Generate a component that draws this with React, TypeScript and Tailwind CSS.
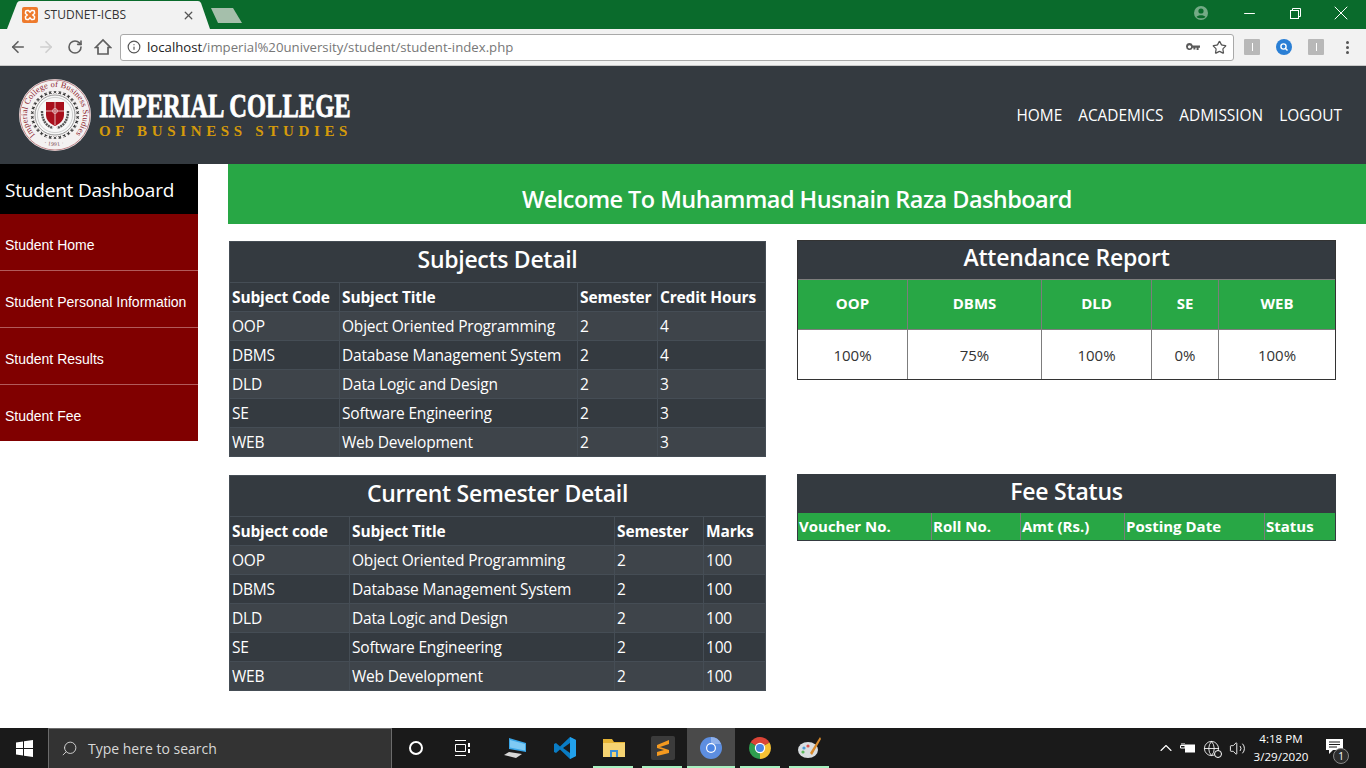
import { ArrowLeft, ArrowRight, RotateCw, Info, Star, X, Minus, Search, ChevronUp, Volume2, Globe } from "lucide-react";

const SEGOE = "font-['Open_Sans',sans-serif]";

const subjects = [
  { code: "OOP", title: "Object Oriented Programming", semester: "2", credit: "4", marks: "100" },
  { code: "DBMS", title: "Database Management System", semester: "2", credit: "4", marks: "100" },
  { code: "DLD", title: "Data Logic and Design", semester: "2", credit: "3", marks: "100" },
  { code: "SE", title: "Software Engineering", semester: "2", credit: "3", marks: "100" },
  { code: "WEB", title: "Web Development", semester: "2", credit: "3", marks: "100" },
];

const attendance = [
  { name: "OOP", value: "100%", width: "w-[110px]" },
  { name: "DBMS", value: "75%", width: "w-[134px]" },
  { name: "DLD", value: "100%", width: "w-[110px]" },
  { name: "SE", value: "0%", width: "w-[67px]" },
  { name: "WEB", value: "100%", width: "w-[116px]" },
];

const feeColumns = [
  { name: "Voucher No.", width: "w-[134px]" },
  { name: "Roll No.", width: "w-[89px]" },
  { name: "Amt (Rs.)", width: "w-[104px]" },
  { name: "Posting Date", width: "w-[140px]" },
  { name: "Status", width: "w-[70px]" },
];

function Seal() {
  const ticks = Array.from({ length: 30 }, (_, i) => i * 12);
  return (
    <svg width="74" height="74" viewBox="0 0 74 74" className="shrink-0">
      <defs>
        <path id="sealArc" d="M 17.2 56.8 A 28 28 0 1 1 56.8 56.8" />
        <path id="sealYear" d="M 22 64 A 31 31 0 0 0 52 64" />
      </defs>
      <circle cx="37" cy="37" r="36" fill="#f4f1f1" />
      <circle cx="37" cy="37" r="35" fill="none" stroke="#9a3a42" strokeWidth="0.6" />
      <text fontFamily="'Liberation Serif',serif" fontSize="8.4" fill="#8e2530" textLength="130">
        <textPath href="#sealArc">Imperial College of Business Studies</textPath>
      </text>
      <text fontFamily="'Liberation Serif',serif" fontSize="5.5" fill="#6b3a40" letterSpacing="0.4">
        <textPath href="#sealYear" startOffset="14%">· 1991 ·</textPath>
      </text>
      {ticks.map((deg) => (
        <g key={deg} transform={`rotate(${deg} 37 37)`}>
          <path d="M35.8 13 L38.2 15.4 M38.2 13 L35.8 15.4" stroke="#3a3a3a" strokeWidth="1" />
        </g>
      ))}
      <circle cx="37" cy="37" r="20" fill="#f7f7f7" stroke="#9b9b9b" strokeWidth="1" />
      <circle cx="37" cy="37" r="17.6" fill="none" stroke="#bdbdbd" strokeWidth="0.7" />
      <path d="M24 33 C24 42 28 48 35 50 M50 33 C50 42 46 48 39 50" fill="none" stroke="#555" strokeWidth="2.4" strokeDasharray="2 0.7" />
      <path d="M28 24 H46 V37 C46 43 41 46 37 48 C33 46 28 43 28 37 Z" fill="#a80f1c" />
      <path d="M37 24 V47 M28 33 H46" stroke="#e9c9c9" strokeWidth="0.9" />
      <circle cx="37" cy="33" r="2.4" fill="none" stroke="#f2dede" strokeWidth="0.8" />
    </svg>
  );
}

function Xampp() {
  return (
    <svg width="16" height="16" viewBox="0 0 16 16" className="shrink-0">
      <rect width="16" height="16" rx="2" fill="#ee7a2c" />
      <path d="M3.5 5 Q3.5 3.5 5 3.5 H6.5 L8 5.2 L9.5 3.5 H11 Q12.5 3.5 12.5 5 V6.5 L10.8 8 L12.5 9.5 V11 Q12.5 12.5 11 12.5 H9.5 L8 10.8 L6.5 12.5 H5 Q3.5 12.5 3.5 11 V9.5 L5.2 8 L3.5 6.5 Z" fill="none" stroke="#fff" strokeWidth="1.5" />
    </svg>
  );
}

function TabStrip() {
  return (
    <div className="flex h-[29px] bg-[#0a6b2c]">
      <div className="relative ml-[7px] flex h-[28px] w-[203px] items-center self-end pl-[15px]">
        <svg width="203" height="28" viewBox="0 0 203 28" className="absolute left-0 top-0">
          <path d="M0 28 L10 2 Q11 0 13 0 H191 Q193 0 194 2 L203 28 Z" fill="#f2f2f2" />
        </svg>
        <div className="relative flex w-[173px] items-center">
          <Xampp />
          <span className={`ml-[6px] text-[12px] text-[#333] ${SEGOE}`}>STUDNET-ICBS</span>
          <X size={13} strokeWidth={2.4} className="ml-auto text-[#555]" />
        </div>
      </div>
      <svg width="34" height="16" viewBox="0 0 34 16" className="mt-[8px] shrink-0">
        <path d="M1 0 H23 L32 15 H8 Z" fill="#a5bfab" />
      </svg>
      <div className="ml-auto flex items-start pr-[2px]">
        <svg width="16" height="16" viewBox="0 0 16 16" className="mr-[17px] mt-[5px]">
          <circle cx="8" cy="8" r="7" fill="#74ab86" />
          <circle cx="8" cy="6" r="2.6" fill="#0a6b2c" />
          <path d="M3.5 12 C5 9.5 11 9.5 12.5 12 C11 13.8 5 13.8 3.5 12 Z" fill="#0a6b2c" />
        </svg>
        <div className="flex h-[26px] w-[46px] items-center justify-center">
          <Minus size={17} strokeWidth={1.4} className="text-white" />
        </div>
        <div className="flex h-[26px] w-[46px] items-center justify-center">
          <svg width="11" height="11" viewBox="0 0 11 11" fill="none" stroke="#fff" strokeWidth="1">
            <rect x="0.5" y="2.5" width="8" height="8" />
            <path d="M2.5 2.5 V0.5 H10.5 V8.5 H8.5" />
          </svg>
        </div>
        <div className="flex h-[26px] w-[46px] items-center justify-center">
          <X size={24} strokeWidth={1} className="text-white" />
        </div>
      </div>
    </div>
  );
}

function ExtensionTile() {
  return (
    <div className="flex h-4 w-4 items-center justify-center rounded-[1px] bg-[#b8b8b8]">
      <div className="h-2 w-px bg-white" />
    </div>
  );
}

function Toolbar() {
  return (
    <div className="flex h-[37px] items-center border-b border-[#c9c9c9] bg-[#f2f2f2]">
      <ArrowLeft size={18} strokeWidth={2.2} className="ml-[9px] text-[#5f5f5f]" />
      <ArrowRight size={18} strokeWidth={2.2} className="ml-[10px] text-[#cfcfcf]" />
      <RotateCw size={16} strokeWidth={2.4} className="ml-[12px] text-[#5f5f5f]" />
      <svg width="18" height="18" viewBox="0 0 18 18" fill="none" stroke="#5f5f5f" strokeWidth="1.7" className="ml-[11px]">
        <path d="M1.5 9.5 L9 2 L16.5 9.5 H14 V16 H4 V9.5 Z" />
      </svg>
      <div className="ml-[8px] flex h-[27px] w-[1114px] items-center rounded-[3px] border border-[#a9a9a9] bg-white px-[6px]">
        <Info size={14} strokeWidth={2} className="text-[#555]" />
        <span className={`ml-[6px] pt-px text-[13.2px] ${SEGOE}`}>
          <span className="text-[#222]">localhost</span>
          <span className="text-[#777]">/imperial%20university/student/student-index.php</span>
        </span>
        <svg width="14" height="8" viewBox="0 0 14 8" className="ml-auto" fill="#5a5a5a">
          <path fillRule="evenodd" d="M3.5 0 A3.5 3.5 0 0 1 6.8 2.4 H14 V4.8 H12.6 V7 H10.6 V4.8 H9.4 V6.4 H7.4 V4.8 H6.8 A3.5 3.5 0 1 1 3.5 0 Z M3.5 2.2 A1.5 1.5 0 1 0 3.5 5.4 A1.5 1.5 0 1 0 3.5 2.2 Z" />
        </svg>
        <Star size={15} strokeWidth={2} className="ml-[12px] text-[#555]" />
      </div>
      <div className="ml-[10px]">
        <ExtensionTile />
      </div>
      <svg width="16" height="16" viewBox="0 0 16 16" className="ml-[16px]">
        <circle cx="8" cy="8" r="8" fill="#2a7fd5" />
        <circle cx="7.5" cy="7.5" r="2.6" fill="none" stroke="#fff" strokeWidth="1.4" />
        <path d="M9.5 9.5 L11.5 11.5" stroke="#fff" strokeWidth="1.4" />
      </svg>
      <div className="ml-[16px]">
        <ExtensionTile />
      </div>
      <div className="ml-[22px] flex flex-col gap-[2px]">
        <div className="h-[3px] w-[3px] rounded-full bg-[#555]" />
        <div className="h-[3px] w-[3px] rounded-full bg-[#555]" />
        <div className="h-[3px] w-[3px] rounded-full bg-[#555]" />
      </div>
    </div>
  );
}

function SiteHeader() {
  return (
    <header className="flex h-[98px] items-center bg-[#343a40] pl-[18px] pr-[24px]">
      <Seal />
      <div className="ml-[7px] w-[251px]">
        <div className="-mt-px origin-left scale-x-[0.722] whitespace-nowrap font-['Liberation_Serif',serif] text-[34px] font-bold leading-[34px] text-white [-webkit-text-stroke:0.8px_white]">
          IMPERIAL COLLEGE
        </div>
        <div className="-mt-px whitespace-nowrap font-['Liberation_Serif',serif] text-[15px] font-bold leading-[18px] tracking-[4.66px] text-[#d59a0b]">
          OF BUSINESS STUDIES
        </div>
      </div>
      <nav className={`ml-auto mt-[2px] flex gap-[16px] text-[15.4px] text-white ${SEGOE}`}>
        <span>HOME</span>
        <span>ACADEMICS</span>
        <span>ADMISSION</span>
        <span>LOGOUT</span>
      </nav>
    </header>
  );
}

function Sidebar() {
  const items = ["Student Home", "Student Personal Information", "Student Results", "Student Fee"];
  return (
    <aside className="w-[198px] shrink-0">
      <div className={`flex h-[50px] items-center bg-black pl-[5px] pt-[2px] text-[19px] tracking-[-0.2px] text-white ${SEGOE}`}>
        Student Dashboard
      </div>
      {items.map((item) => (
        <div
          key={item}
          className="flex h-[57px] items-center border-b border-[#b25a5a] bg-[#800000] pl-[5px] pt-[7px] font-['Liberation_Sans',sans-serif] text-[14px] text-white last:h-[56px] last:border-b-0"
        >
          {item}
        </div>
      ))}
    </aside>
  );
}

function DarkTable({
  title,
  columns,
  widths,
  rows,
}: {
  title: string;
  columns: string[];
  widths: string[];
  rows: string[][];
}) {
  return (
    <table className={`w-[536px] table-fixed border-collapse bg-[#343a40] text-[15.5px] text-white ${SEGOE}`}>
      <colgroup>
        {widths.map((w) => (
          <col key={w} className={w} />
        ))}
      </colgroup>
      <thead>
        <tr className="h-[41px]">
          <th colSpan={columns.length} className="border border-[#454d55] pb-[5px] text-center text-[23px] font-semibold tracking-[-0.3px]">
            {title}
          </th>
        </tr>
        <tr className="h-[29px]">
          {columns.map((col) => (
            <th key={col} className="whitespace-nowrap border border-[#454d55] pl-[2px] pt-px text-left font-bold tracking-[-0.15px]">
              {col}
            </th>
          ))}
        </tr>
      </thead>
      <tbody>
        {rows.map((row, r) => (
          <tr key={row[0]} className={`h-[29px] ${r % 2 === 0 ? "bg-[#3e444a]" : "bg-[#343a40]"}`}>
            {row.map((cell, c) => (
              <td key={c} className="whitespace-nowrap border border-[#454d55] pl-[2px] pt-px tracking-[-0.2px]">
                {cell}
              </td>
            ))}
          </tr>
        ))}
      </tbody>
    </table>
  );
}

function Panels() {
  return (
    <div className="flex pl-px pt-[16px]">
      <div className="flex w-[537px] flex-col gap-[18px] pt-px">
        <DarkTable
          title="Subjects Detail"
          columns={["Subject Code", "Subject Title", "Semester", "Credit Hours"]}
          widths={["w-[110px]", "w-[238px]", "w-[80px]", "w-[108px]"]}
          rows={subjects.map((s) => [s.code, s.title, s.semester, s.credit])}
        />
        <DarkTable
          title="Current Semester Detail"
          columns={["Subject code", "Subject Title", "Semester", "Marks"]}
          widths={["w-[120px]", "w-[265px]", "w-[89px]", "w-[62px]"]}
          rows={subjects.map((s) => [s.code, s.title, s.semester, s.marks])}
        />
      </div>
      <div className={`ml-[31px] w-[539px] ${SEGOE}`}>
        <div className="h-[140px] border border-[#333] bg-white">
          <div className="flex h-[38px] items-center justify-center bg-[#343a40] pb-[5px] text-[23px] font-semibold tracking-[-0.2px] text-white">
            Attendance Report
          </div>
          <div className="flex">
            {attendance.map((a) => (
              <div key={a.name} className={`${a.width} border-r border-[#7d7d7d] last:flex-1 last:border-r-0`}>
                <div className="flex h-[51px] items-center justify-center border-y border-[#7d7d7d] bg-[#28a745] pb-[2px] text-[15px] font-bold text-white">
                  {a.name}
                </div>
                <div className="flex h-[49px] items-center justify-center pt-px text-[15px] text-[#333]">{a.value}</div>
              </div>
            ))}
          </div>
        </div>
        <div className="mt-[94px] h-[67px] border border-[#343a40]">
          <div className="flex h-[38px] items-center justify-center bg-[#343a40] pb-[5px] text-[23px] font-semibold tracking-[-0.2px] text-white">
            Fee Status
          </div>
          <div className="flex h-[27px] bg-[#28a745]">
            {feeColumns.map((col) => (
              <div
                key={col.name}
                className={`${col.width} flex items-center border-r border-[#7d7d7d] pl-px text-[15px] font-bold text-white last:flex-1 last:border-r-0`}
              >
                {col.name}
              </div>
            ))}
          </div>
        </div>
      </div>
    </div>
  );
}

function ChromeLogo({ mono }: { mono?: boolean }) {
  if (mono) {
    return (
      <svg width="22" height="22" viewBox="0 0 22 22">
        <circle cx="11" cy="11" r="11" fill="#5d8ee0" />
        <path d="M11 0 A11 11 0 0 1 21 7 H11 Z" fill="#8fb0ea" />
        <circle cx="11" cy="11" r="5" fill="#fff" />
        <circle cx="11" cy="11" r="3.8" fill="#4a84e4" />
      </svg>
    );
  }
  return (
    <svg width="22" height="22" viewBox="0 0 22 22">
      <path d="M11 11 L1.5 5.5 A11 11 0 0 1 20.5 5.5 Z" fill="#dc4437" />
      <path d="M11 11 L20.5 5.5 A11 11 0 0 1 11 22 Z" fill="#f6c133" />
      <path d="M11 11 L11 22 A11 11 0 0 1 1.5 5.5 Z" fill="#2f9e4f" />
      <circle cx="11" cy="11" r="5.2" fill="#fff" />
      <circle cx="11" cy="11" r="4" fill="#4a84e4" />
    </svg>
  );
}

function TaskbarApps() {
  const underline = "absolute bottom-0 h-[2px] w-[40px] bg-[#a8f0c0]";
  return (
    <div className="flex h-full items-center">
      <div className="flex h-full w-[48px] items-center justify-center">
        <svg width="14" height="14" viewBox="0 0 14 14" fill="none" stroke="#fff" strokeWidth="2">
          <circle cx="7" cy="7" r="6" />
        </svg>
      </div>
      <div className="flex h-full w-[47px] items-center justify-center">
        <svg width="17" height="16" viewBox="0 0 17 16" fill="none" stroke="#fff" strokeWidth="1">
          <path d="M0 .5 H11 M0 15.5 H11 M.5 4.5 H10.5 V11.5 H.5 Z" />
          <path d="M14 3 V7 M14 9 V13" strokeWidth="2" />
        </svg>
      </div>
      <div className="flex h-full w-[56px] items-center justify-center">
        <svg width="24" height="22" viewBox="0 0 24 22">
          <path d="M6 1 L23 6 V15 L6 12 Z" fill="#3aa6e8" />
          <path d="M7 3 L22 7 V13.5 L7 10.5 Z" fill="#7fcaf4" />
          <path d="M1 18 L6 15 L19 17 L13 21 Z" fill="#d8d8d8" />
        </svg>
      </div>
      <div className="flex h-full w-[46px] items-center justify-center pr-[3px]">
        <svg width="24" height="24" viewBox="0 0 24 24">
          <path d="M17 1 L23 4 V20 L17 23 L7 13.5 L3 17 L1 16 V8 L3 7 L7 10.5 Z" fill="#0a7cc4" />
          <path d="M17 1 L23 4 V20 L17 23 Z" fill="#22a1ec" />
          <path d="M17 7 L10 12 L17 17 Z" fill="#1a1a1a" />
        </svg>
      </div>
      <div className="relative flex h-full w-[49px] items-center justify-center">
        <svg width="22" height="20" viewBox="0 0 22 20">
          <path d="M0 1 H9 L11 4 H22 V19 H0 Z" fill="#e5b334" />
          <rect y="5" width="22" height="14" fill="#f5d372" />
          <path d="M7 19 V12 H15 V19 H13 V14 H9 V19 Z" fill="#3b8ed6" />
        </svg>
        <div className={`${underline} left-[4px]`} />
      </div>
      <div className="relative flex h-full w-[49px] items-center justify-center">
        <div className="flex h-6 w-6 items-center justify-center rounded-[2px] bg-[#3b3b3b]">
          <svg width="12" height="16" viewBox="0 0 12 16" fill="#f59a1f">
            <path d="M12 0 V4 L0 8 V5 Z M0 6 L12 10 V13 L0 16 V12 L7 10 L0 8 Z" />
          </svg>
        </div>
        <div className={`${underline} left-[4px]`} />
      </div>
      <div className="relative flex h-full w-[48px] items-center justify-center bg-[#4a4a4a]">
        <ChromeLogo mono />
        <div className="absolute bottom-0 left-0 h-[2px] w-full bg-[#a8f0c0]" />
      </div>
      <div className="relative flex h-full w-[50px] items-center justify-center">
        <ChromeLogo />
        <div className={`${underline} left-[5px]`} />
      </div>
      <div className="relative flex h-full w-[49px] items-center justify-center">
        <svg width="24" height="24" viewBox="0 0 24 24">
          <ellipse cx="10" cy="14" rx="10" ry="8" fill="#d9dde0" />
          <circle cx="6" cy="12" r="1.6" fill="#4a9ad4" />
          <circle cx="10" cy="10" r="1.6" fill="#d9534f" />
          <circle cx="5" cy="16" r="1.6" fill="#5cb85c" />
          <path d="M22 1 L12 17 L14 19 L23 3 Z" fill="#d98a2b" />
        </svg>
        <div className={`${underline} left-[4px]`} />
      </div>
    </div>
  );
}

function Taskbar() {
  return (
    <div className={`flex h-[40px] items-center bg-[#1a1a1a] text-white ${SEGOE}`}>
      <div className="flex h-full w-[48px] items-center justify-center">
        <svg width="17" height="17" viewBox="0 0 17 17" fill="#fff">
          <path d="M0 2.4 L7 1.4 V8 H0 Z M8 1.2 L17 0 V8 H8 Z M0 9 H7 V15.6 L0 14.6 Z M8 9 H17 V17 L8 15.8 Z" />
        </svg>
      </div>
      <div className="flex h-full w-[344px] items-center border border-b-0 border-[#6b6b6b] bg-[#333] pl-[12px] text-[14px] text-[#d8d8d8]">
        <Search size={17} strokeWidth={1.3} className="-scale-x-100" />
        <span className="ml-[10px]">Type here to search</span>
      </div>
      <TaskbarApps />
      <div className="ml-auto flex h-full items-center">
        <ChevronUp size={20} strokeWidth={1.3} />
        <svg width="16" height="12" viewBox="0 0 16 12" className="ml-[3px]" fill="none" stroke="#fff">
          <path d="M3 1 V3 M5 1 V3 M1.5 3.5 H6 V6 H1.5 Z" />
          <rect x="6.5" y="3" width="9" height="7" fill="#fff" />
        </svg>
        <div className="relative ml-[8px]">
          <Globe size={17} strokeWidth={1.2} />
          <div className="absolute bottom-[-1px] right-[-2px] h-[8px] w-[8px] rounded-full border border-white bg-[#1a1a1a]" />
        </div>
        <Volume2 size={17} strokeWidth={1.3} className="ml-[9px]" />
        <div className="ml-[2px] w-[66px] text-center text-[11.6px] leading-[18px]">
          <div>4:18 PM</div>
          <div>3/29/2020</div>
        </div>
        <div className="relative ml-[9px] mr-[19px] flex h-full w-[24px] items-center">
          <svg width="17" height="15" viewBox="0 0 17 15" className="-mt-[3px] ml-[3px]">
            <path d="M0 0 H17 V11 H7 L3 15 V11 H0 Z" fill="#fff" />
            <path d="M3 3 H14 M3 5.5 H14 M3 8 H11" stroke="#1a1a1a" />
          </svg>
          <div className="absolute bottom-[4px] right-[-2px] flex h-[16px] w-[16px] items-center justify-center rounded-full border border-[#888] bg-[#2d2d2d] text-[10px]">
            1
          </div>
        </div>
      </div>
    </div>
  );
}

export default function App() {
  return (
    <div className="flex h-screen flex-col overflow-hidden bg-white">
      <TabStrip />
      <Toolbar />
      <SiteHeader />
      <main className="flex min-h-0 flex-1">
        <Sidebar />
        <div className="ml-[30px] flex-1">
          <div className={`flex h-[60px] items-center justify-center bg-[#28a745] pt-[11px] text-[23.5px] font-semibold tracking-[-0.55px] text-white ${SEGOE}`}>
            Welcome To Muhammad Husnain Raza Dashboard
          </div>
          <Panels />
        </div>
      </main>
      <Taskbar />
    </div>
  );
}
